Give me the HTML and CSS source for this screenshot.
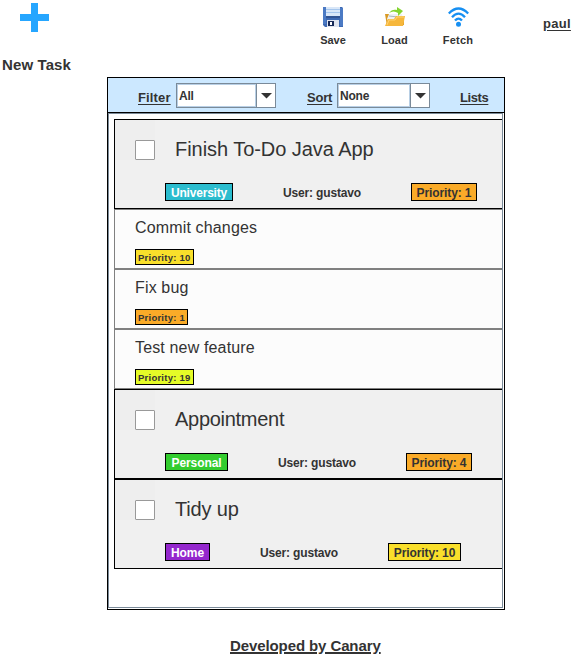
FILE: index.html
```html
<!DOCTYPE html>
<html lang="en">
<head>
<meta charset="utf-8">
<title>To-Do</title>
<link rel="stylesheet" href="styles.css">
</head>
<body>
<header class="top">
  <div class="new-task">
    <svg width="32" height="31" viewBox="0 0 32 31"><path d="M12 1h7v11h11v7H19v11h-7V19H1v-7h11z" fill="#26a6ff"/></svg>
    <span class="new-label">New Task</span>
  </div>
  <nav class="actions">
    <div class="action save">
      <svg width="20" height="20" viewBox="0 0 20 20"><path d="M0 0h19l1 1v19H2l-2-2z" fill="#3d69b2"/><path d="M0 0h3v17H0zM17 1h3v18h-3z" fill="#4b7ac4"/><path d="M3 0h14v9H3z" fill="#d9e7f8"/><path d="M3 2.500h14M3 5.500h14" stroke="#a5c6ed"/><path d="M3 9h14v2H3z" fill="#315493"/><path d="M4 13h12v7H4z" fill="#dfe4ee"/><path d="M5 14h6v5H5z" fill="#172957"/><path d="M7 15h2v3H7z" fill="#fff"/></svg>
      <span>Save</span>
    </div>
    <div class="action load">
      <svg width="22" height="20" viewBox="0 0 22 20"><path d="M1 7h5l2 2h12v9L3 19z" fill="#d99a25"/><path d="M3 12l2-5 13 0 1 7H4z" fill="#eef1f4"/><path d="M5 9l9 1" stroke="#aab4bd"/><path d="M1 19l3-7h6l2-3h9l-2 10z" fill="#f6b73c"/><path d="M3 18l2-5h6l2-3h7" fill="none" stroke="#ffd372"/><path d="M5 6c2-3 5-4 8-3V0l6 4-5 5V6c-3-2-6-2-9 0z" fill="#83d52f"/></svg>
      <span>Load</span>
    </div>
    <div class="action fetch">
      <svg width="21" height="20" viewBox="0 0 21 20"><g fill="none" stroke="#168ff2" stroke-width="2.300"><path d="M.8 6.500Q10.500-3.500 20.200 6.500"/><path d="M4 10.200Q10.500 3 17 10.200"/><path d="M7 13.600Q10.500 9.600 14 13.600"/></g><circle cx="10.500" cy="17.200" r="2.500" fill="#168ff2"/></svg>
      <span>Fetch</span>
    </div>
  </nav>
  <a class="account">paul</a>
</header>

<main class="panel">
  <div class="toolbar">
    <a class="filter-label">Filter</a>
    <div class="combo combo-filter"><span class="value">All</span><span class="drop"><svg width="11" height="6" viewBox="0 0 11 6"><path d="M0 0h11L5.500 5.500z" fill="#333"/></svg></span></div>
    <a class="sort-label">Sort</a>
    <div class="combo combo-sort"><span class="value">None</span><span class="drop"><svg width="11" height="6" viewBox="0 0 11 6"><path d="M0 0h11L5.500 5.500z" fill="#333"/></svg></span></div>
    <a class="lists-label">Lists</a>
  </div>
  <div class="scroll">
    <section class="task">
      <div class="head"><div class="check-cell"><span class="check"></span></div><h2 class="t-finish">Finish To-Do Java App</h2></div>
      <div class="meta"><span class="tag university">University</span><span class="user">User: gustavo</span><span class="tag p-one">Priority: 1</span></div>
    </section>
    <section class="sub"><h3 class="s-commit">Commit changes</h3><span class="badge yellow">Priority: 10</span></section>
    <section class="sub"><h3 class="s-fix">Fix bug</h3><span class="badge orange">Priority: 1</span></section>
    <section class="sub"><h3 class="s-test">Test new feature</h3><span class="badge lime">Priority: 19</span></section>
    <section class="task">
      <div class="head"><div class="check-cell"><span class="check"></span></div><h2 class="t-app">Appointment</h2></div>
      <div class="meta"><span class="tag personal">Personal</span><span class="user">User: gustavo</span><span class="tag p-one">Priority: 4</span></div>
    </section>
    <section class="task">
      <div class="head"><div class="check-cell"><span class="check"></span></div><h2 class="t-tidy">Tidy up</h2></div>
      <div class="meta"><span class="tag home">Home</span><span class="user">User: gustavo</span><span class="tag p-ten">Priority: 10</span></div>
    </section>
  </div>
</main>
<footer><a>Developed by Canary</a></footer>
</body>
</html>
```
FILE: styles.css
```css
* { box-sizing: border-box; }
body { margin: 0; width: 583px; height: 662px; overflow: hidden; background: #fff; color: #333; font: bold 12px/14px "Liberation Sans", Arial, sans-serif; }
svg { display: block; }
span, a, h2, h3 { white-space: nowrap; }
a { text-decoration: underline; text-underline-offset: 2px; text-decoration-thickness: 1px; }
h2, h3 { margin: 0; font-weight: normal; }

.top { display: flex; height: 77px; }
.new-task { width: 107px; padding: 2px 0 0 2px; }
.new-task svg { margin-left: 17px; }
.new-label { display: block; margin-top: 23px; font-size: 15px; line-height: 18px; letter-spacing: .12px; }
.actions { display: flex; width: 383px; padding: 7px 0 0 195px; font-size: 11px; }
.action { display: flex; flex: none; flex-direction: column; align-items: center; gap: 6px; width: 62px; }
.load { width: 63px; margin-left: -1px; }
.fetch { width: 64px; letter-spacing: .2px; }
.account { margin: 17px 0 0 53px; font-size: 13px; letter-spacing: .3px; }

.panel { width: 398px; height: 533px; margin-left: 107px; border: 1px solid #000; }
.toolbar { display: flex; height: 35px; padding: 5px 0 0 30px; background: #cce8ff; border-bottom: 1px solid #000; font-size: 13px; }
.toolbar a { margin-top: 8px; }
.filter-label { width: 38px; letter-spacing: .15px; }
.sort-label { width: 30px; margin-left: 31px; letter-spacing: -.2px; }
.lists-label { margin-left: 30px; letter-spacing: -.4px; }
.combo { display: flex; height: 25px; border: 1px solid #7a8a99; background: #fff; font-size: 12px; }
.combo-filter { width: 100px; }
.combo-sort { width: 93px; }
.value { flex: 1; padding: 4px 0 0 1px; border: 1px solid #b8cfe5; letter-spacing: -.2px; }
.drop { width: 19px; border-left: 1px solid #7a8a99; padding: 9px 0 0 4px; }

.scroll { height: 495px; width: 395px; padding: 5px 0 0 5px; border: 1px solid #7a8a99; }
.task { height: 90px; background: #f0f0f0; border: 1px solid #000; border-right: 0; }
.head { display: flex; height: 40px; }
.check-cell { width: 40px; height: 40px; padding: 20px 0 0 20px; background: #eee; }
.check { display: block; width: 20px; height: 20px; border: 1px solid #999; background: #fff; border-radius: 1px; }
h2 { margin: 17px 0 0 20px; font-size: 20px; line-height: 24px; letter-spacing: -.05px; }
.t-app { letter-spacing: -.28px; }
.t-tidy { letter-spacing: -.15px; }
.meta { display: flex; gap: 50px; margin: 23px 0 0 50px; }
.tag { height: 18px; border: 1px solid #000; text-align: center; line-height: 18px; letter-spacing: -.1px; }
.user { width: 78px; line-height: 20px; letter-spacing: -.16px; }
.university { width: 68px; background: #2bbcce; color: #fff; letter-spacing: -.2px; }
.personal { width: 63px; background: #33cc2e; color: #fff; }
.home { width: 45px; background: #9427cd; color: #fff; }
.p-one { width: 66px; background: #faab28; }
.p-ten { width: 73px; background: #f9df2b; }

.sub { height: 60px; padding: 8px 0 0 20px; background: #fcfcfc; border: 1px solid #808080; border-right: 0; }
h3 { font-size: 16px; line-height: 20px; letter-spacing: .15px; }
.badge { display: block; width: 59px; height: 16px; margin-top: 11px; border: 1px solid #000; padding-left: 2px; font-size: 9.5px; line-height: 15px; letter-spacing: .24px; }
.yellow { background: #f9df2b; }
.orange { width: 53px; background: #faab28; }
.lime { background: #e5fb27; }
footer { margin: 27px 0 0 230px; font-size: 15px; line-height: 17px; letter-spacing: -.1px; }
footer a { text-decoration-thickness: 2px; text-underline-offset: 1px; }
```
